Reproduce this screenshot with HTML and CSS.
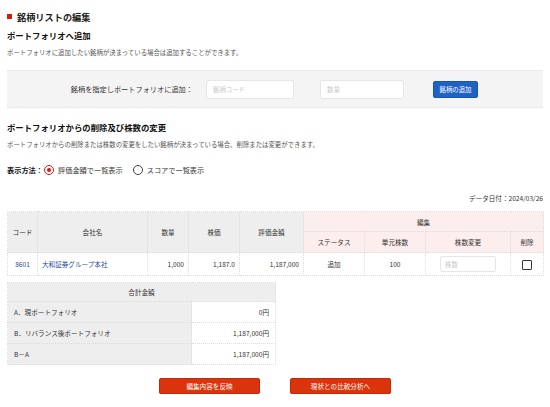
FILE: index.html
```html
<!DOCTYPE html>
<html lang="ja">
<head>
<meta charset="utf-8">
<link rel="stylesheet" href="styles.css">
</head>
<body>
<div class="page">
  <h1 class="title"><span class="mark"></span>銘柄リストの編集</h1>
  <h2 class="heading">ポートフォリオへ追加</h2>
  <p class="desc">ポートフォリオに追加したい銘柄が決まっている場合は追加することができます。</p>
  <div class="addbox">
    <span class="addlabel">銘柄を指定しポートフォリオに追加：</span>
    <input class="field" type="text" placeholder="銘柄コード">
    <input class="field" type="text" placeholder="数量">
    <button class="btn-blue">銘柄の追加</button>
  </div>
  <h2 class="heading heading2">ポートフォリオからの削除及び株数の変更</h2>
  <p class="desc">ポートフォリオからの削除または株数の変更をしたい銘柄が決まっている場合、削除または変更ができます。</p>
  <div class="mode">
    <span class="modelabel">表示方法：</span>
    <label class="radio"><span class="dot on"></span>評価金額で一覧表示</label>
    <label class="radio"><span class="dot"></span>スコアで一覧表示</label>
  </div>
  <div class="date">データ日付：2024/03/26</div>
  <table class="list">
    <colgroup>
      <col class="c-code"><col class="c-name"><col class="c-qty"><col class="c-price"><col class="c-val">
      <col class="c-st"><col class="c-unit"><col class="c-chg"><col class="c-del">
    </colgroup>
    <thead>
      <tr class="h1">
        <th rowspan="2">コード</th>
        <th rowspan="2">会社名</th>
        <th rowspan="2">数量</th>
        <th rowspan="2">株価</th>
        <th rowspan="2">評価金額</th>
        <th colspan="4" class="edit">編集</th>
      </tr>
      <tr class="h2">
        <th class="edit">ステータス</th>
        <th class="edit">単元株数</th>
        <th class="edit">株数変更</th>
        <th class="edit">削除</th>
      </tr>
    </thead>
    <tbody>
      <tr>
        <td class="center"><a class="link">8601</a></td>
        <td><a class="link">大和証券グループ本社</a></td>
        <td class="num">1,000</td>
        <td class="num">1,187.0</td>
        <td class="num">1,187,000</td>
        <td class="center">追加</td>
        <td class="center">100</td>
        <td class="center"><input class="small-field" type="text" placeholder="株数"></td>
        <td class="center"><span class="check"></span></td>
      </tr>
    </tbody>
  </table>
  <table class="total">
    <thead>
      <tr><th colspan="2">合計金額</th></tr>
    </thead>
    <tbody>
      <tr><td class="lbl">A．現ポートフォリオ</td><td class="val">0円</td></tr>
      <tr><td class="lbl">B．リバランス後ポートフォリオ</td><td class="val">1,187,000円</td></tr>
      <tr><td class="lbl">B－A</td><td class="val">1,187,000円</td></tr>
    </tbody>
  </table>
  <div class="actions">
    <button class="btn-red">編集内容を反映</button>
    <button class="btn-red">現状との比較分析へ</button>
  </div>
</div>
</body>
</html>
```
FILE: styles.css
```css
* { box-sizing: border-box; }
html, body { margin: 0; padding: 0; background: #fff; }
body {
  font-family: "Noto Sans CJK JP", "Noto Sans", sans-serif;
  color: #333;
}
.page { padding: 0 7px; width: 550px; }
.title {
  margin: 0;
  padding-top: 9px;
  height: 24px;
  display: flex;
  align-items: center;
  font-size: 9.2px;
  font-weight: bold;
  line-height: 14px;
  color: #222;
}
.mark { width: 5px; height: 5px; background: #e0140f; margin-right: 5px; }
.heading {
  margin: 0;
  margin-top: 5px;
  font-size: 8.4px;
  font-weight: bold;
  line-height: 13px;
  height: 13px;
  color: #111;
}
.desc {
  margin: 6px 0 0;
  font-size: 6.4px;
  line-height: 10px;
  height: 10px;
  color: #555;
}
.addbox {
  margin-top: 12px;
  height: 38px;
  background: #f4f4f4;
  border-top: 1px dotted #e2e2e2;
  border-bottom: 1px dotted #e2e2e2;
  display: flex;
  align-items: center;
  padding-left: 63px;
}
.addlabel { font-size: 7.2px; color: #333; width: 123px; text-align: right; white-space: nowrap; }
.field {
  margin-left: 13px;
  width: 88px;
  height: 19px;
  border: 1px solid #e6e6e6;
  border-radius: 2px;
  background: #fff;
  font-family: inherit;
  font-size: 6.4px;
  padding: 0 6px;
  outline: none;
}
.field + .field { margin-left: 26px; width: 84px; }
.field::placeholder, .small-field::placeholder { color: #c8c8c8; }
.btn-blue {
  margin-left: 29px;
  width: 45px;
  height: 17px;
  background: #1e62c5;
  color: #fff;
  border: 1px solid #1a55ad;
  border-radius: 2px;
  font-family: inherit;
  font-size: 6.4px;
  padding: 0;
}
.heading2 { margin-top: 13px; }
.mode {
  margin-top: 14px;
  height: 12px;
  display: flex;
  align-items: center;
  font-size: 7.2px;
}
.modelabel { font-weight: bold; color: #111; width: 37px; }
.radio { display: flex; align-items: center; color: #333; margin-right: 10px; }
.dot {
  width: 10px; height: 10px;
  border: 1px solid #444;
  border-radius: 50%;
  margin-right: 4px;
  display: flex; align-items: center; justify-content: center;
  background: #fff;
}
.dot.on { border-color: #e0140f; }
.dot.on::after { content: ""; width: 4px; height: 4px; border-radius: 50%; background: #e0140f; }
.date {
  margin-top: 17px;
  text-align: right;
  font-size: 6.6px;
  line-height: 10px;
  color: #333;
}
table { border-collapse: collapse; font-size: 6.6px; }
.list { margin-top: 8px; width: 536px; table-layout: fixed; }
.list th, .list td { border: 1px dotted #dcdcdc; font-weight: normal; padding: 0 4px; white-space: nowrap; }
.list th { background: #eeeeee; color: #333; text-align: center; }
.list th.edit { background: #fdeeee; }
.list .h1 th.edit { height: 20px; }
.list .h2 th { height: 21px; }
.list td { height: 23px; background: #fff; }
.c-code { width: 30px; }
.c-name { width: 110px; }
.c-qty { width: 41px; }
.c-price { width: 51px; }
.c-val { width: 64px; }
.c-st { width: 61px; }
.c-unit { width: 61px; }
.c-chg { width: 85px; }
.c-del { width: 33px; }
.list td.num { text-align: right; }
.list td.center { text-align: center; }
.link { color: #1f4e9c; }
.small-field {
  width: 56px; height: 16px;
  border: 1px solid #e6e6e6;
  border-radius: 2px;
  font-family: inherit;
  font-size: 6.4px;
  padding: 0 4px;
  vertical-align: middle;
}
.check {
  display: inline-block;
  width: 10px; height: 10px;
  border: 1px solid #333;
  border-radius: 1px;
  vertical-align: middle;
}
.total { margin-top: 6px; width: 269px; }
.total th, .total td { border: 1px dotted #dcdcdc; font-weight: normal; padding: 0 6px; }
.total th { height: 19px; background: #eeeeee; text-align: center; }
.total td { height: 21px; }
.total .lbl { background: #eeeeee; width: 184px; }
.total .val { background: #fff; text-align: right; }
.actions {
  margin-top: 13px;
  display: flex;
  justify-content: center;
  gap: 30px;
}
.btn-red {
  width: 101px;
  height: 16px;
  background: #d9340c;
  color: #fff;
  border: 1px solid #c22a05;
  border-radius: 2px;
  font-family: inherit;
  font-size: 6.6px;
  padding: 0;
  box-shadow: 0 1px 1px rgba(0,0,0,0.2);
}
```
